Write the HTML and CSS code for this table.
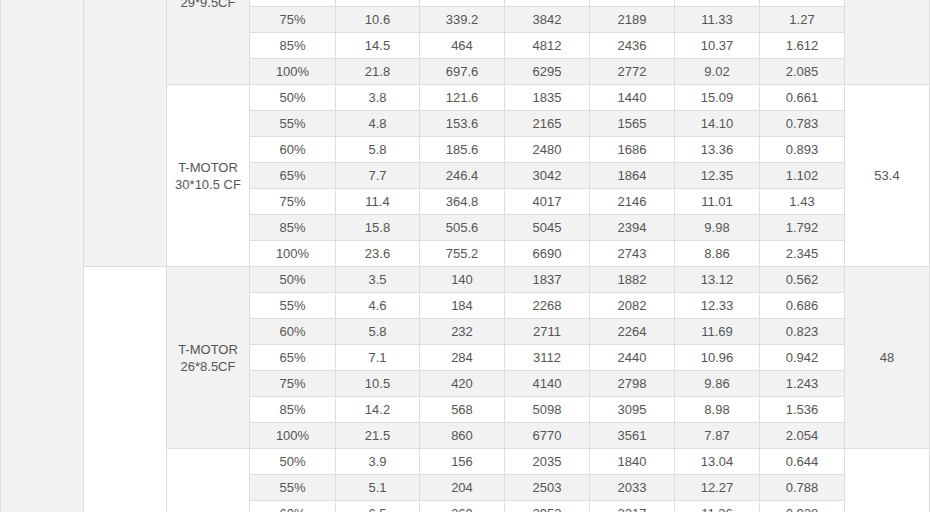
FILE: index.html
```html
<!DOCTYPE html>
<html>
<head>
<meta charset="utf-8">
<title>Propeller data</title>
<link rel="stylesheet" href="styles.css">
</head>
<body>
<table class="data">
<colgroup>
<col class="c83"><col class="c83"><col class="c83"><col class="c86"><col class="c84"><col class="c85"><col class="c85"><col class="c85"><col class="c85"><col class="c85"><col class="c85">
</colgroup>
<tbody>
<tr><td rowspan="28" class="g"></td><td rowspan="14" class="g"></td><td rowspan="7" class="g">T-MOTOR<br>29*9.5CF</td><td>50%</td><td>3.6</td><td>115.2</td><td>1738</td><td>1388</td><td>15.28</td><td>0.625</td><td rowspan="7" class="g">58.2</td></tr>
<tr><td>55%</td><td>4.6</td><td>147.2</td><td>2070</td><td>1512</td><td>14.07</td><td>0.744</td></tr>
<tr><td>60%</td><td>5.6</td><td>179.2</td><td>2380</td><td>1637</td><td>13.28</td><td>0.862</td></tr>
<tr><td>65%</td><td>7.2</td><td>230.4</td><td>2860</td><td>1802</td><td>12.41</td><td>1.064</td></tr>
<tr><td>75%</td><td>10.6</td><td>339.2</td><td>3842</td><td>2189</td><td>11.33</td><td>1.27</td></tr>
<tr><td>85%</td><td>14.5</td><td>464</td><td>4812</td><td>2436</td><td>10.37</td><td>1.612</td></tr>
<tr><td>100%</td><td>21.8</td><td>697.6</td><td>6295</td><td>2772</td><td>9.02</td><td>2.085</td></tr>

<tr><td rowspan="7" class="w">T-MOTOR<br>30*10.5 CF</td><td>50%</td><td>3.8</td><td>121.6</td><td>1835</td><td>1440</td><td>15.09</td><td>0.661</td><td rowspan="7" class="w">53.4</td></tr>
<tr><td>55%</td><td>4.8</td><td>153.6</td><td>2165</td><td>1565</td><td>14.10</td><td>0.783</td></tr>
<tr><td>60%</td><td>5.8</td><td>185.6</td><td>2480</td><td>1686</td><td>13.36</td><td>0.893</td></tr>
<tr><td>65%</td><td>7.7</td><td>246.4</td><td>3042</td><td>1864</td><td>12.35</td><td>1.102</td></tr>
<tr><td>75%</td><td>11.4</td><td>364.8</td><td>4017</td><td>2146</td><td>11.01</td><td>1.43</td></tr>
<tr><td>85%</td><td>15.8</td><td>505.6</td><td>5045</td><td>2394</td><td>9.98</td><td>1.792</td></tr>
<tr><td>100%</td><td>23.6</td><td>755.2</td><td>6690</td><td>2743</td><td>8.86</td><td>2.345</td></tr>

<tr><td rowspan="14" class="w"></td><td rowspan="7" class="g">T-MOTOR<br>26*8.5CF</td><td>50%</td><td>3.5</td><td>140</td><td>1837</td><td>1882</td><td>13.12</td><td>0.562</td><td rowspan="7" class="g">48</td></tr>
<tr><td>55%</td><td>4.6</td><td>184</td><td>2268</td><td>2082</td><td>12.33</td><td>0.686</td></tr>
<tr><td>60%</td><td>5.8</td><td>232</td><td>2711</td><td>2264</td><td>11.69</td><td>0.823</td></tr>
<tr><td>65%</td><td>7.1</td><td>284</td><td>3112</td><td>2440</td><td>10.96</td><td>0.942</td></tr>
<tr><td>75%</td><td>10.5</td><td>420</td><td>4140</td><td>2798</td><td>9.86</td><td>1.243</td></tr>
<tr><td>85%</td><td>14.2</td><td>568</td><td>5098</td><td>3095</td><td>8.98</td><td>1.536</td></tr>
<tr><td>100%</td><td>21.5</td><td>860</td><td>6770</td><td>3561</td><td>7.87</td><td>2.054</td></tr>

<tr><td rowspan="7" class="w">T-MOTOR<br>28*9.2CF</td><td>50%</td><td>3.9</td><td>156</td><td>2035</td><td>1840</td><td>13.04</td><td>0.644</td><td rowspan="7" class="w">44.6</td></tr>
<tr><td>55%</td><td>5.1</td><td>204</td><td>2503</td><td>2033</td><td>12.27</td><td>0.788</td></tr>
<tr><td>60%</td><td>6.5</td><td>260</td><td>2953</td><td>2217</td><td>11.36</td><td>0.928</td></tr>
<tr><td>65%</td><td>8.0</td><td>320</td><td>3390</td><td>2390</td><td>10.59</td><td>1.036</td></tr>
<tr><td>75%</td><td>11.7</td><td>468</td><td>4470</td><td>2760</td><td>9.55</td><td>1.348</td></tr>
<tr><td>85%</td><td>15.9</td><td>636</td><td>5512</td><td>3050</td><td>8.67</td><td>1.684</td></tr>
<tr><td>100%</td><td>24.0</td><td>960</td><td>7210</td><td>3498</td><td>7.51</td><td>2.230</td></tr>
</tbody>
</table>
</body>
</html>
```
FILE: styles.css
```css
html {
  overflow: hidden;
}
body {
  margin: 0;
  background: #ffffff;
  font-family: "Liberation Sans", Arial, sans-serif;
  font-size: 13px;
  color: #555555;
}
.data {
  table-layout: fixed;
  border-collapse: collapse;
  width: 930px;
  margin-top: -98px;
}
.c83 { width: 83px; }
.c84 { width: 84px; }
.c85 { width: 85px; }
.c86 { width: 86px; }
.data td {
  border: 1px solid #dddddd;
  padding: 4px 2px;
  height: 17px;
  line-height: 17px;
  text-align: center;
  vertical-align: middle;
  background: #ffffff;
  white-space: nowrap;
}
.data tr:nth-child(odd) td {
  background: #f2f2f2;
}
.data td.g,
.data tr:nth-child(odd) td.g {
  background: #f2f2f2;
}
.data td.w,
.data tr:nth-child(odd) td.w {
  background: #ffffff;
}
```
